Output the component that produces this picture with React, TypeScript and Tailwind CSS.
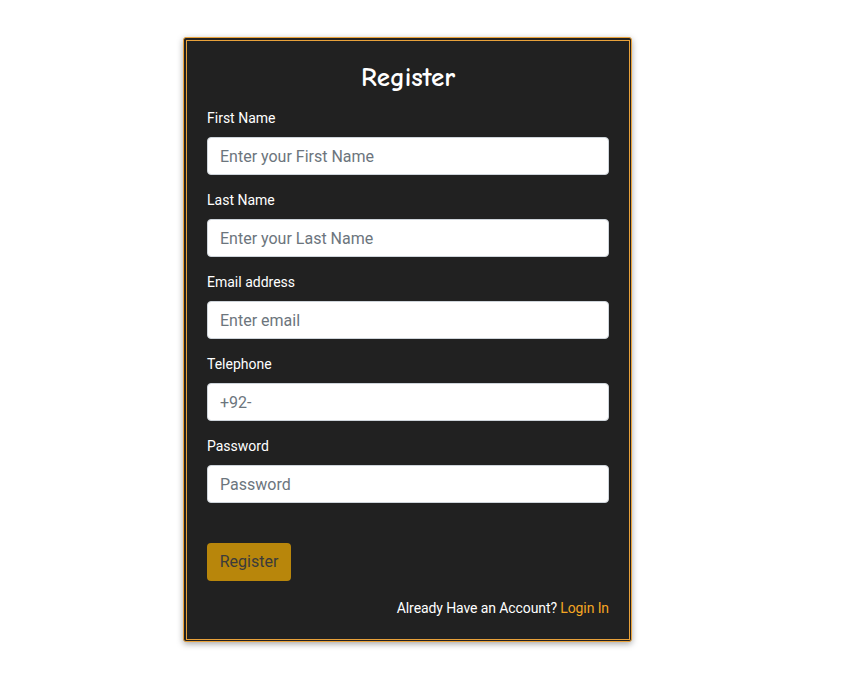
export default function App() {
  const fields = [
    { label: "First Name", ph: "Enter your First Name" },
    { label: "Last Name", ph: "Enter your Last Name" },
    { label: "Email address", ph: "Enter email" },
    { label: "Telephone", ph: "+92-" },
    { label: "Password", ph: "Password" },
  ];
  return (
    <div className="w-[841px] h-[679px] bg-white" style={{ fontFamily: "Roboto, 'Liberation Sans', sans-serif" }}>
      <div className="pt-[37px] pl-[183px]">
        <div className="w-[449px] h-[605px] border border-[#e9a23b] rounded-[3px] bg-[#212121] shadow-[0_2px_6px_rgba(0,0,0,0.35)] pt-[2px] pl-[2px] pr-[1px] pb-[1px]">
          <div className="h-full border border-[#e9a23b] px-[20px] pt-[22px]">
            <h2 className="text-center text-white text-[27px] font-bold leading-[29px] mb-[16px]" style={{ fontFamily: "'Comic Sans MS', 'Comic Neue', cursive" }}>
              Register
            </h2>
            {fields.map((f, i) => (
              <div key={f.label} className={i < fields.length - 1 ? "mb-[15px]" : ""}>
                <label className="block text-white text-[14px] leading-[21px] mb-[8px]">{f.label}</label>
                <input
                  type={f.label === "Password" ? "password" : "text"}
                  placeholder={f.ph}
                  className="block w-full h-[38px] rounded-[4px] bg-white border border-[#ced4da] px-[12px] text-[16px] text-[#495057] placeholder:text-[#6c757d] outline-none"
                />
              </div>
            ))}
            <button className="mt-[40px] h-[38px] w-[84px] px-[12px] rounded-[4px] bg-[#b8860b] text-[#3b3b3b] text-[16px] leading-[24px]">
              Register
            </button>
            <p className="mt-[17px] text-right text-white text-[14px] leading-[21px] tracking-[-0.1px]">
              Already Have an Account? <span className="text-[#f5a623]">Login In</span>
            </p>
          </div>
        </div>
      </div>
    </div>
  );
}
